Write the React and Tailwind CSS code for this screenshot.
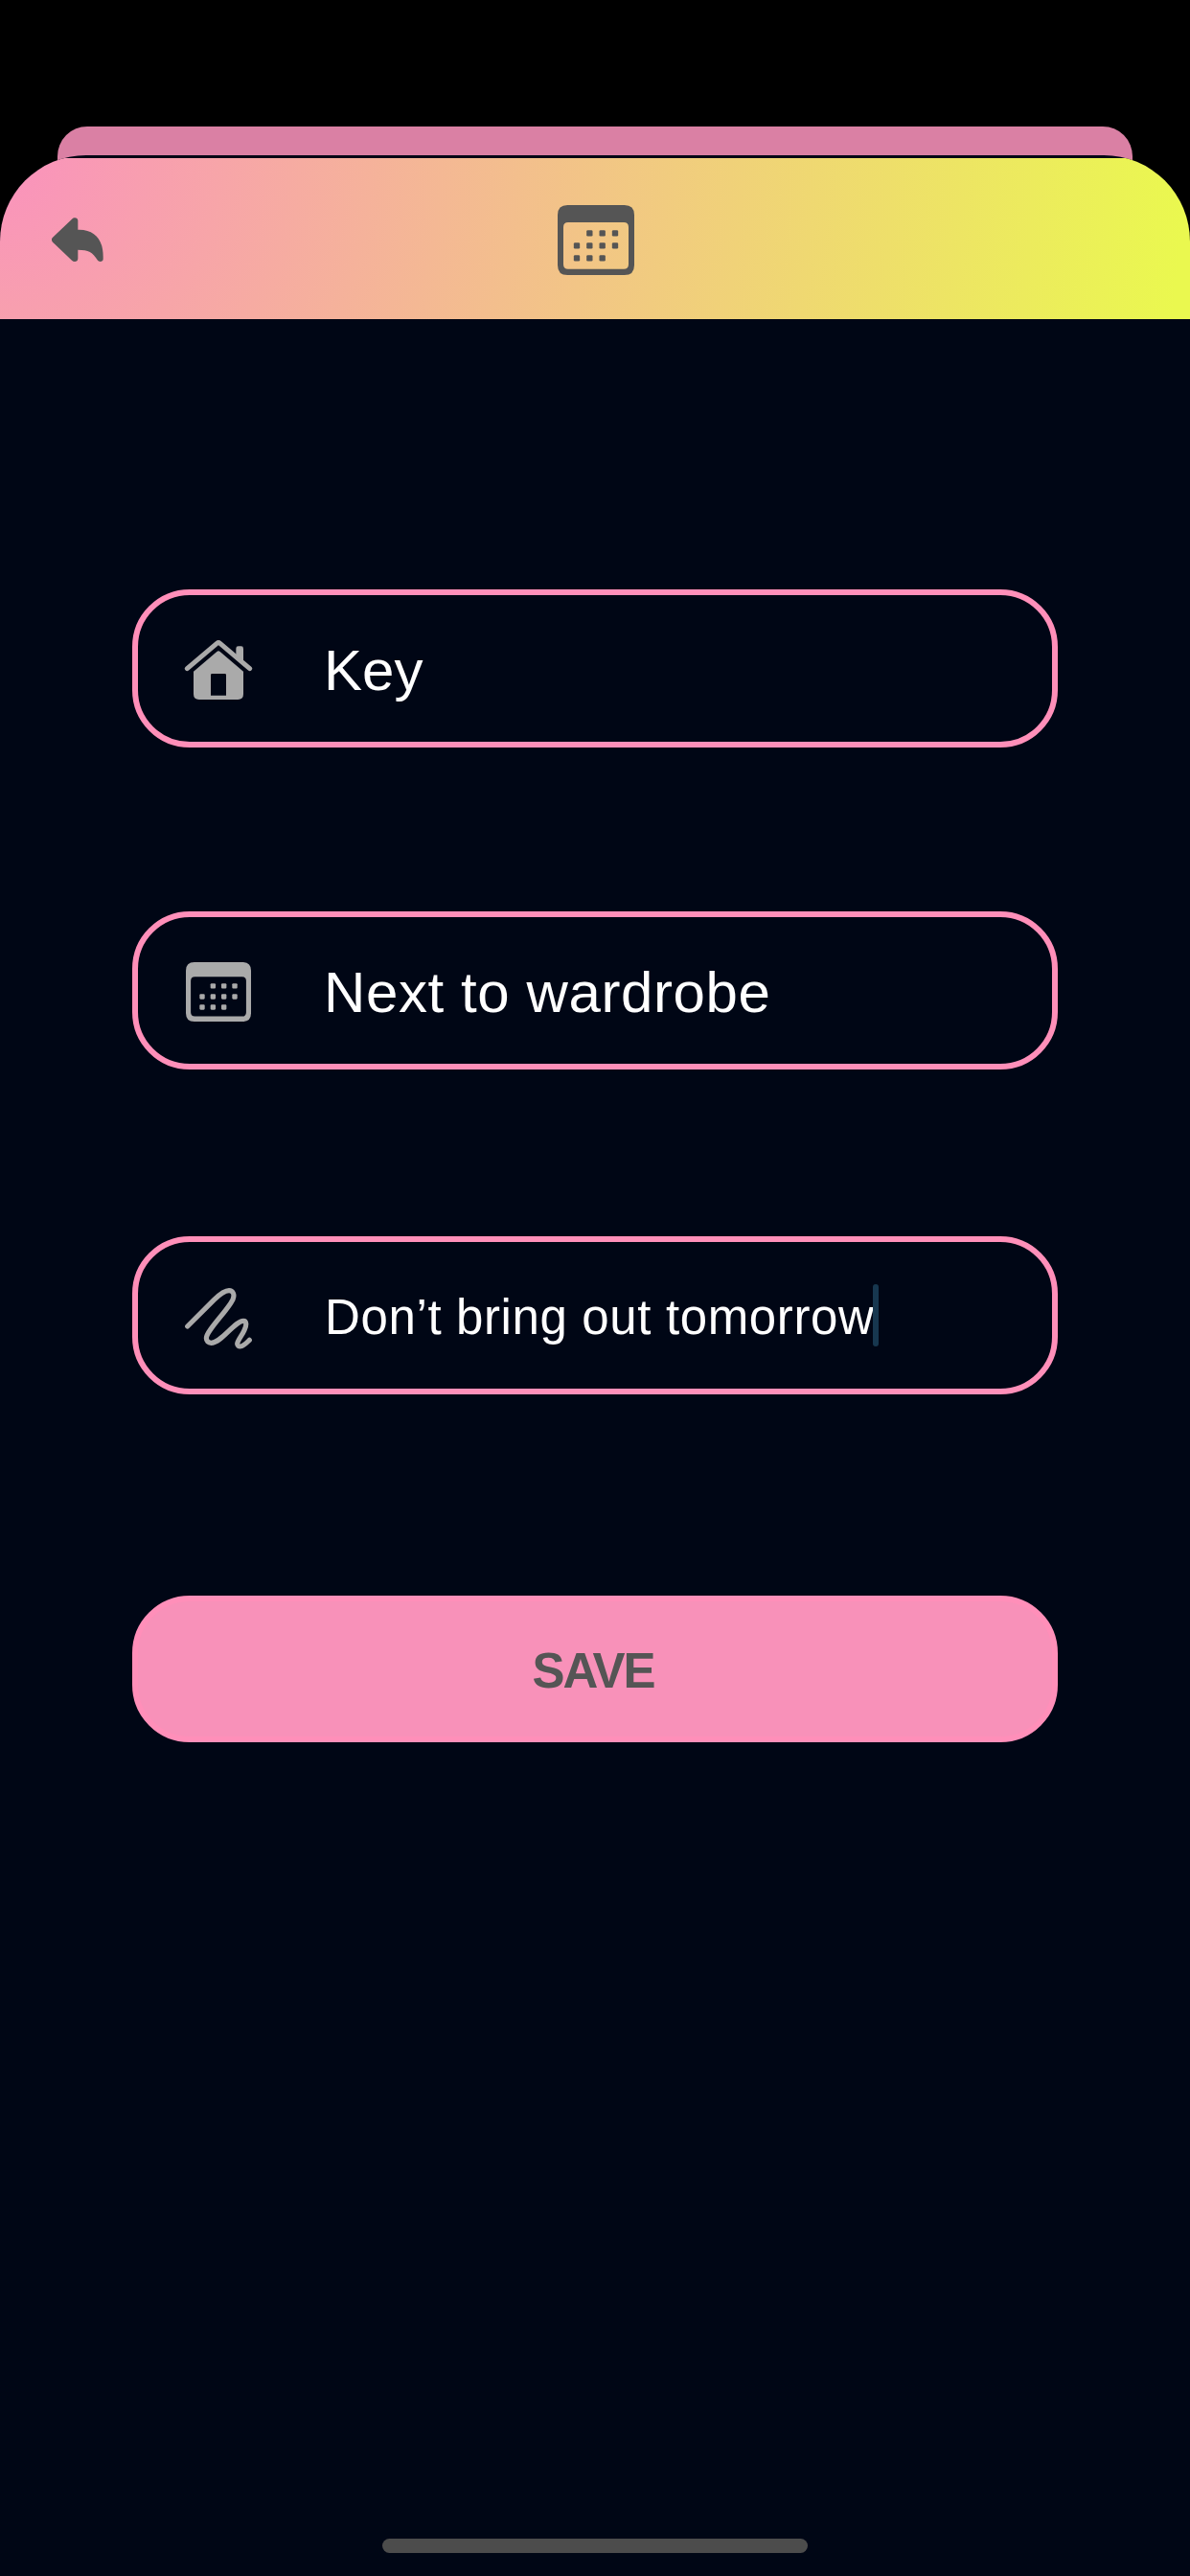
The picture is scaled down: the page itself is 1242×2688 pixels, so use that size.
function ReplyIcon() {
  return (
    <svg className="h-[54px] w-[54px]" viewBox="162 336 162 162" fill="#555555">
      <path d="M165 413 L225 356 C232 349 244 351 244 361 V389 C297 387 323 421 323 473 V481 C323 490 310 492 305 484 C291 460 277 452 244 452 V479 C244 489 232 492 225 485 L165 428 Q158 420 165 413 Z" />
    </svg>
  );
}

const DOTS = [
  [166, 160], [206, 160], [246, 160],
  [126, 199], [166, 199], [206, 199], [246, 199],
  [126, 238], [166, 238], [206, 238],
];

function CalendarIcon({ color, className, viewBox }) {
  return (
    <svg className={className} viewBox={viewBox} preserveAspectRatio="none" fill={color}>
      <path
        fillRule="evenodd"
        d="M97 72 H275 Q306 72 306 103 V260 Q306 291 275 291 H97 Q66 291 66 260 V103 Q66 72 97 72 Z M99 126 Q84 126 84 141 V257 Q84 272 99 272 H273 Q288 272 288 257 V141 Q288 126 273 126 Z"
      />
      {DOTS.map(([x, y]) => (
        <rect key={x + "-" + y} x={x - 9.5} y={y - 9.5} width="19" height="19" rx="4" />
      ))}
    </svg>
  );
}

function HouseIcon() {
  return (
    <svg className="h-[75px] w-[72px]" viewBox="216 180 216 225" fill="#aaaaaa">
      <path d="M379 258 V230 Q379 223 386 223 H395 Q402 223 402 230 V278 Z" />
      <path
        d="M226 293 L319 214 Q324 210 329 214 L422 293"
        fill="none"
        stroke="#aaaaaa"
        strokeWidth="15"
        strokeLinecap="round"
        strokeLinejoin="round"
      />
      <path
        fillRule="evenodd"
        d="M246 302 L319 240 Q324 236 329 240 L402 302 V373 Q402 390 385 390 H263 Q246 390 246 373 Z M304 309 Q300 309 300 313 V377 H348 V313 Q348 309 344 309 Z"
      />
    </svg>
  );
}

function ScribbleIcon() {
  return (
    <svg className="h-[75px] w-[72px]" viewBox="216 195 216 225" fill="none">
      <path
        d="M227 342 L310 259 C330 240 346 230 357 230 C369 230 375 241 370 255 C362 283 286 355 286 379 C286 388 292 394 301 394 C334 394 375 325 402 325 C412 325 413 338 405 354 C398 371 383 386 383 397 C383 402 387 405 392 405 C402 405 413 393 421 385"
        stroke="#aaaaaa"
        strokeWidth="15.5"
        strokeLinecap="round"
        strokeLinejoin="round"
      />
    </svg>
  );
}

function Field({ icon, children, className }) {
  return (
    <div className={"flex h-[165px] w-[966px] items-center rounded-[60px] border-[6px] border-[#ff8fb9] pl-12 " + className}>
      {icon}
      <div className="ml-[74px] flex items-center whitespace-nowrap text-white">{children}</div>
    </div>
  );
}

export default function App() {
  return (
    <div className="flex h-[2688px] w-[1242px] flex-col overflow-hidden bg-black pt-[132px] font-['Liberation_Sans',Arial,sans-serif]">
      <div className="mx-auto h-[90px] w-[1122px] shrink-0 rounded-t-[31px] bg-[#da80a4]" />
      <main className="relative -mt-[60px] flex flex-1 flex-col items-center overflow-hidden rounded-t-[90px] bg-[#000615] pt-[3px]">
        <header className="grid h-[168px] w-full grid-cols-3 items-center bg-[radial-gradient(circle_1235px_at_0_0,#fa92bd,#eaf84f)] px-[54px]">
          <button className="justify-self-start" aria-label="Back">
            <ReplyIcon />
          </button>
          <CalendarIcon color="#555555" className="h-[78px] w-[82px] justify-self-center" viewBox="60 60 246 234" />
        </header>

        <Field className="mt-[282px]" icon={<HouseIcon />}>
          <span className="pt-1 text-[60px] leading-[72px]">Key</span>
        </Field>
        <Field
          className="mt-[171px]"
          icon={<CalendarIcon color="#aaaaaa" className="h-[75px] w-[72px]" viewBox="58.9 43.7 254.1 265" />}
        >
          <span className="pt-1 text-[60px] leading-[72px] tracking-[0.6px]">Next to wardrobe</span>
        </Field>
        <Field className="mt-[174px]" icon={<ScribbleIcon />}>
          <span className="pl-px pt-1 text-[51px] leading-[60px] tracking-[0.63px]">Don’t bring out tomorrow</span>
          <span className="-ml-[2px] h-[65px] w-[6px] rounded-full bg-[#17374f]" />
        </Field>

        <button className="mt-[210px] flex h-[153px] w-[966px] items-center justify-center rounded-[60px] border-[6px] border-[#ff8fb9] bg-[#f891b9] pr-1 pt-1 text-[51px] font-bold leading-[60px] tracking-[-2px] text-[#555555]">
          SAVE
        </button>

        <div className="mb-[24px] mt-auto h-[15px] w-[444px] rounded-full bg-[#4c4c4c]" />
      </main>
    </div>
  );
}
